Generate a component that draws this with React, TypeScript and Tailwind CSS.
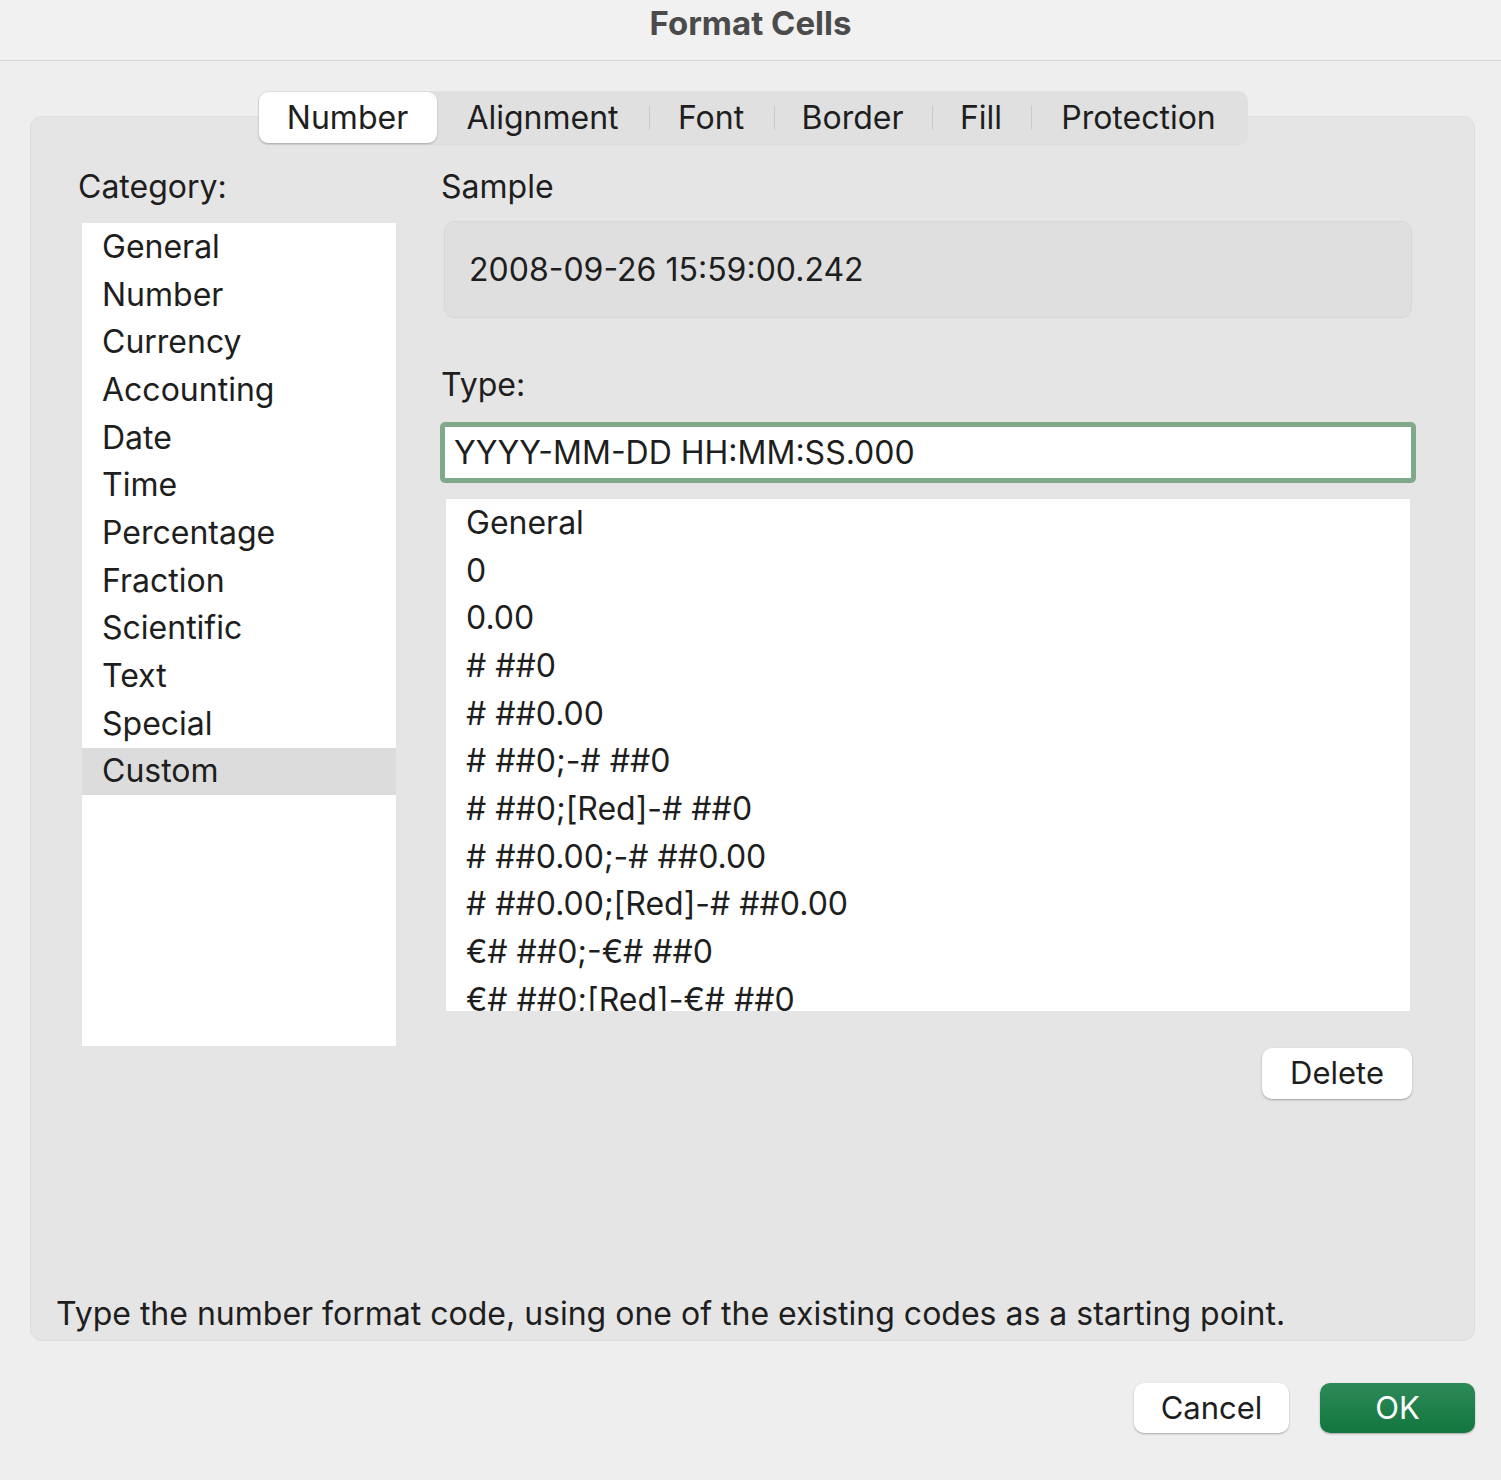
import React from 'react';

const categories = [
  'General',
  'Number',
  'Currency',
  'Accounting',
  'Date',
  'Time',
  'Percentage',
  'Fraction',
  'Scientific',
  'Text',
  'Special',
  'Custom',
];

const formats = [
  'General',
  '0',
  '0.00',
  '# ##0',
  '# ##0.00',
  '# ##0;-# ##0',
  '# ##0;[Red]-# ##0',
  '# ##0.00;-# ##0.00',
  '# ##0.00;[Red]-# ##0.00',
  '€# ##0;-€# ##0',
  '€# ##0;[Red]-€# ##0',
];

// widths taken from the screenshot so the separators land in the same spot
const tabs = [
  { name: 'Number', w: 'w-[178px]' },
  { name: 'Alignment', w: 'w-[212px]' },
  { name: 'Font', w: 'w-[125px]' },
  { name: 'Border', w: 'w-[158px]' },
  { name: 'Fill', w: 'w-[99px]' },
  { name: 'Protection', w: 'w-[216px]' },
];

function TabBar() {
  return (
    <div className="relative z-10 mx-auto flex h-[53px] items-center rounded-[10px] bg-[#e0e0e0] p-px shadow-[0_1px_1px_rgba(0,0,0,0.05)]">
      {tabs.map((t, i) => {
        const selected = i === 0;
        const sep = i > 1;
        return (
          <div key={t.name} className={`relative flex h-[51px] items-center justify-center ${t.w}`}>
            {sep && <div className="absolute left-0 top-[14px] h-[24px] w-px bg-[#c9c9c9]" />}
            <div
              className={
                selected
                  ? 'flex h-full w-full items-center justify-center rounded-[9px] bg-white shadow-[0_1px_2px_rgba(0,0,0,0.25)]'
                  : 'flex h-full w-full items-center justify-center'
              }
            >
              <span className="text-[32px] leading-none text-[#1e1e1e]">{t.name}</span>
            </div>
          </div>
        );
      })}
    </div>
  );
}

export default function App() {
  return (
    <div
      className="min-h-[1480px] w-[1501px] bg-[#eeeeee] text-[#1e1e1e]"
      style={{ fontFamily: 'Inter, "Noto Sans", sans-serif' }}
    >
      {/* title bar */}
      <div className="flex h-[61px] items-center justify-center border-b border-[#d3d3d3] bg-[#f0f1f0]">
        <span className="-mt-[12px] text-[33px] font-bold text-[#4b4b4b]">Format Cells</span>
      </div>

      <div className="ml-[30px] w-[1445px] pt-[30px]">
        <div className="flex justify-center">
          <TabBar />
        </div>

        {/* main panel */}
        <div className="-mt-[28px] flex h-[1225px] flex-col rounded-[12px] border border-[#dcdcdc] bg-[#e5e5e5] pt-[50px]">
          <div className="flex">
            {/* category column */}
            <div className="ml-[51px] w-[314px]">
              <div className="-ml-[4px] h-[40px] text-[32px] leading-[40px]">Category:</div>
              <div className="mt-[16px] h-[823px] bg-white">
                {categories.map((c) => (
                  <div
                    key={c}
                    className={`flex h-[47.7px] items-center pl-[20px] text-[32px] ${
                      c === 'Custom' ? 'bg-[#dcdcdc]' : ''
                    }`}
                  >
                    {c}
                  </div>
                ))}
              </div>
            </div>

            {/* right column */}
            <div className="ml-[44px] flex w-[976px] flex-col">
              <div className="ml-[1px] h-[40px] text-[32px] leading-[40px]">Sample</div>
              <div className="ml-[4px] mt-[14px] flex h-[97px] w-[968px] items-center rounded-[10px] border border-[#d8d8d8] bg-[#dfdfdf] pl-[24px] text-[32px]">
                2008-09-26 15:59:00.242
              </div>

              <div className="ml-[1px] mt-[47px] h-[40px] text-[32px] leading-[40px]">Type:</div>
              <div className="mt-[17px] h-[61px] w-[976px] rounded-[5px] bg-[#7fa98a] p-[5px]">
                <div className="flex h-full items-center bg-white pl-[9px] text-[32px]">
                  YYYY-MM-DD HH:MM:SS.000
                </div>
              </div>

              <div className="ml-[6px] mt-[16px] h-[512px] w-[964px] overflow-hidden bg-white">
                {formats.map((f) => (
                  <div key={f} className="flex h-[47.7px] shrink-0 items-center pl-[20px] text-[32px]">
                    {f}
                  </div>
                ))}
              </div>

              <div className="mt-[37px] flex w-[972px] justify-end">
                <button className="h-[51px] w-[150px] rounded-[10px] bg-white text-[31px] shadow-[0_1px_2px_rgba(0,0,0,0.3)]">
                  Delete
                </button>
              </div>
            </div>
          </div>

          <div className="mt-auto mb-[6px] ml-[25px] text-[32px] leading-[40px]">
            Type the number format code, using one of the existing codes as a starting point.
          </div>
        </div>

        {/* footer buttons */}
        <div className="mt-[42px] flex justify-end gap-[31px]">
          <button className="h-[50px] w-[155px] rounded-[10px] bg-white text-[31px] shadow-[0_1px_2px_rgba(0,0,0,0.3)]">
            Cancel
          </button>
          <button className="h-[50px] w-[155px] rounded-[10px] bg-gradient-to-b from-[#2c8a58] to-[#12763e] text-[31px] text-white shadow-[0_1px_2px_rgba(0,0,0,0.3)]">
            OK
          </button>
        </div>
      </div>
    </div>
  );
}
